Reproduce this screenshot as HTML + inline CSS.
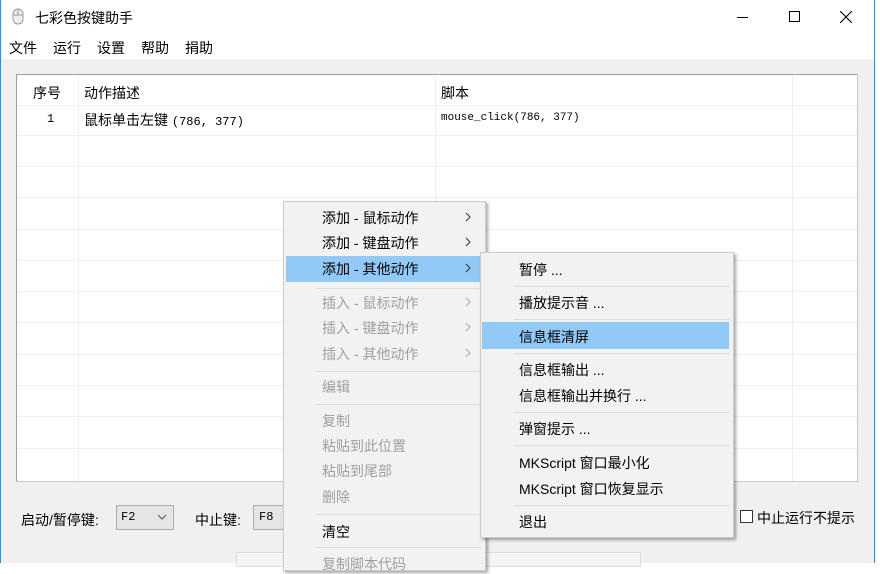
<!DOCTYPE html>
<html><head><meta charset="utf-8"><style>
*{margin:0;padding:0;box-sizing:border-box}
body{width:880px;height:563px;overflow:hidden;background:#fff;font-family:"Liberation Sans","Noto Sans CJK SC",sans-serif;font-size:14px;color:#000;position:relative}
.a{position:absolute;white-space:nowrap}
.body{position:absolute;left:1px;top:59px;width:873px;height:504px;background:#f0f0f0}
.list{position:absolute;left:16px;top:74px;width:842px;height:408px;background:#fff;border:1px solid #a0a0a0;border-right-color:#c8c8c8;border-bottom-color:#c8c8c8;overflow:hidden}
.h{position:absolute;left:0;width:842px;height:1px;background:#f0f0f0}
.v{position:absolute;top:0;width:1px;height:408px;background:#eee}
.mono{font-family:"Liberation Mono","Noto Sans CJK SC",monospace;font-size:12px}
.menu{position:absolute;background:#f2f2f2;border:1px solid #ccc;box-shadow:2px 2px 3px rgba(0,0,0,.35)}
.it{position:absolute;white-space:nowrap;font-size:14px}
.dis{color:#a0a0a0}
.sep{position:absolute;height:1px;background:#dcdcdc}
.hl{position:absolute;background:#91c9f7}
.arr{position:absolute;width:6px;height:10px}
</style></head><body>
<div class="a" style="left:0;top:0;width:1px;height:563px;background:#3c8ed8"></div>
<div class="a" style="left:874px;top:0;width:1px;height:563px;background:#3c8ed8"></div>
<svg class="a" style="left:12px;top:8px" width="12" height="17" viewBox="0 0 12 17"><rect x="1" y="1" width="10" height="15" rx="5" fill="#eee" stroke="#999"/><line x1="6" y1="1" x2="6" y2="7" stroke="#999"/><line x1="1" y1="7" x2="11" y2="7" stroke="#999"/></svg>
<div class="a" style="left:35px;top:8px;font-size:14px">七彩色按键助手</div>
<div class="a" style="left:737px;top:17px;width:11px;height:1px;background:#000"></div>
<div class="a" style="left:789px;top:11px;width:11px;height:11px;border:1px solid #000"></div>
<svg class="a" style="left:840px;top:11px" width="12" height="12"><path d="M0 0L12 12M12 0L0 12" stroke="#000" stroke-width="1.1"/></svg>
<div class="a" style="left:9px;top:38px">文件</div>
<div class="a" style="left:53px;top:38px">运行</div>
<div class="a" style="left:97px;top:38px">设置</div>
<div class="a" style="left:141px;top:38px">帮助</div>
<div class="a" style="left:185px;top:38px">捐助</div>
<div class="body"></div>
<div class="list">
<div class="v" style="left:61px"></div><div class="v" style="left:418px"></div><div class="v" style="left:775px"></div>
<div class="h" style="top:30px"></div><div class="h" style="top:60px"></div><div class="h" style="top:91px"></div><div class="h" style="top:122px"></div><div class="h" style="top:154px"></div><div class="h" style="top:185px"></div><div class="h" style="top:216px"></div><div class="h" style="top:247px"></div><div class="h" style="top:279px"></div><div class="h" style="top:310px"></div><div class="h" style="top:341px"></div><div class="h" style="top:373px"></div>
<div class="a" style="left:16px;top:8px">序号</div>
<div class="a" style="left:67px;top:8px">动作描述</div>
<div class="a" style="left:424px;top:8px">脚本</div>
<div class="a mono" style="left:30px;top:37px">1</div>
<div class="a" style="left:67px;top:35px">鼠标单击左键 <span class="mono">(786, 377)</span></div>
<div class="a mono" style="left:424px;top:37px;font-size:11px">mouse_click(786, 377)</div>
</div>
<div class="a" style="left:21px;top:510px">启动/暂停键:</div>
<div class="a" style="left:116px;top:505px;width:58px;height:25px;background:#e5e5e5;border:1px solid #acacac"></div>
<div class="a mono" style="left:121px;top:510px">F2</div>
<svg class="a" style="left:157px;top:514px" width="10" height="6"><path d="M1 1L5 5L9 1" fill="none" stroke="#555"/></svg>
<div class="a" style="left:195px;top:510px">中止键:</div>
<div class="a" style="left:253px;top:505px;width:40px;height:25px;background:#e5e5e5;border:1px solid #acacac"></div>
<div class="a mono" style="left:259px;top:510px">F8</div>
<div class="a" style="left:236px;top:552px;width:405px;height:15px;background:#f5f5f5;border:1px solid #ddd"></div>
<div class="a" style="left:740px;top:510px;width:13px;height:13px;border:1px solid #333;background:#fff"></div>
<div class="a" style="left:757px;top:508px">中止运行不提示</div>

<div class="menu" style="left:283px;top:201px;width:203px;height:370px">
<div class="hl" style="left:2px;top:54px;width:197px;height:26px"></div>
<div class="it" style="left:38px;top:6px">添加 - 鼠标动作</div><svg class="arr" style="left:181px;top:10px"><path d="M1 1L5 5L1 9" fill="none" stroke="#333"/></svg>
<div class="it" style="left:38px;top:31px">添加 - 键盘动作</div><svg class="arr" style="left:181px;top:35px"><path d="M1 1L5 5L1 9" fill="none" stroke="#333"/></svg>
<div class="it" style="left:38px;top:57px">添加 - 其他动作</div><svg class="arr" style="left:181px;top:61px"><path d="M1 1L5 5L1 9" fill="none" stroke="#333"/></svg>
<div class="sep" style="left:32px;top:86px;width:165px"></div>
<div class="it dis" style="left:38px;top:91px">插入 - 鼠标动作</div><svg class="arr" style="left:181px;top:95px"><path d="M1 1L5 5L1 9" fill="none" stroke="#aaa"/></svg>
<div class="it dis" style="left:38px;top:116px">插入 - 键盘动作</div><svg class="arr" style="left:181px;top:120px"><path d="M1 1L5 5L1 9" fill="none" stroke="#aaa"/></svg>
<div class="it dis" style="left:38px;top:142px">插入 - 其他动作</div><svg class="arr" style="left:181px;top:146px"><path d="M1 1L5 5L1 9" fill="none" stroke="#aaa"/></svg>
<div class="sep" style="left:32px;top:169px;width:165px"></div>
<div class="it dis" style="left:38px;top:175px">编辑</div>
<div class="sep" style="left:32px;top:202px;width:165px"></div>
<div class="it dis" style="left:38px;top:209px">复制</div>
<div class="it dis" style="left:38px;top:234px">粘贴到此位置</div>
<div class="it dis" style="left:38px;top:259px">粘贴到尾部</div>
<div class="it dis" style="left:38px;top:285px">删除</div>
<div class="sep" style="left:32px;top:312px;width:165px"></div>
<div class="it" style="left:38px;top:320px">清空</div>
<div class="sep" style="left:32px;top:345px;width:165px"></div>
<div class="it dis" style="left:38px;top:352px">复制脚本代码</div>
</div>

<div class="menu" style="left:480px;top:252px;width:254px;height:286px">
<div class="hl" style="left:1px;top:69px;width:247px;height:27px"></div>
<div class="it" style="left:38px;top:7px">暂停 ...</div>
<div class="sep" style="left:32px;top:33px;width:216px"></div>
<div class="it" style="left:38px;top:40px">播放提示音 ...</div>
<div class="sep" style="left:32px;top:66px;width:216px"></div>
<div class="it" style="left:38px;top:74px">信息框清屏</div>
<div class="sep" style="left:32px;top:100px;width:216px"></div>
<div class="it" style="left:38px;top:107px">信息框输出 ...</div>
<div class="it" style="left:38px;top:133px">信息框输出并换行 ...</div>
<div class="sep" style="left:32px;top:159px;width:216px"></div>
<div class="it" style="left:38px;top:166px">弹窗提示 ...</div>
<div class="sep" style="left:32px;top:192px;width:216px"></div>
<div class="it" style="left:38px;top:200px">MKScript 窗口最小化</div>
<div class="it" style="left:38px;top:226px">MKScript 窗口恢复显示</div>
<div class="sep" style="left:32px;top:252px;width:216px"></div>
<div class="it" style="left:38px;top:259px">退出</div>
</div>
</body></html>
